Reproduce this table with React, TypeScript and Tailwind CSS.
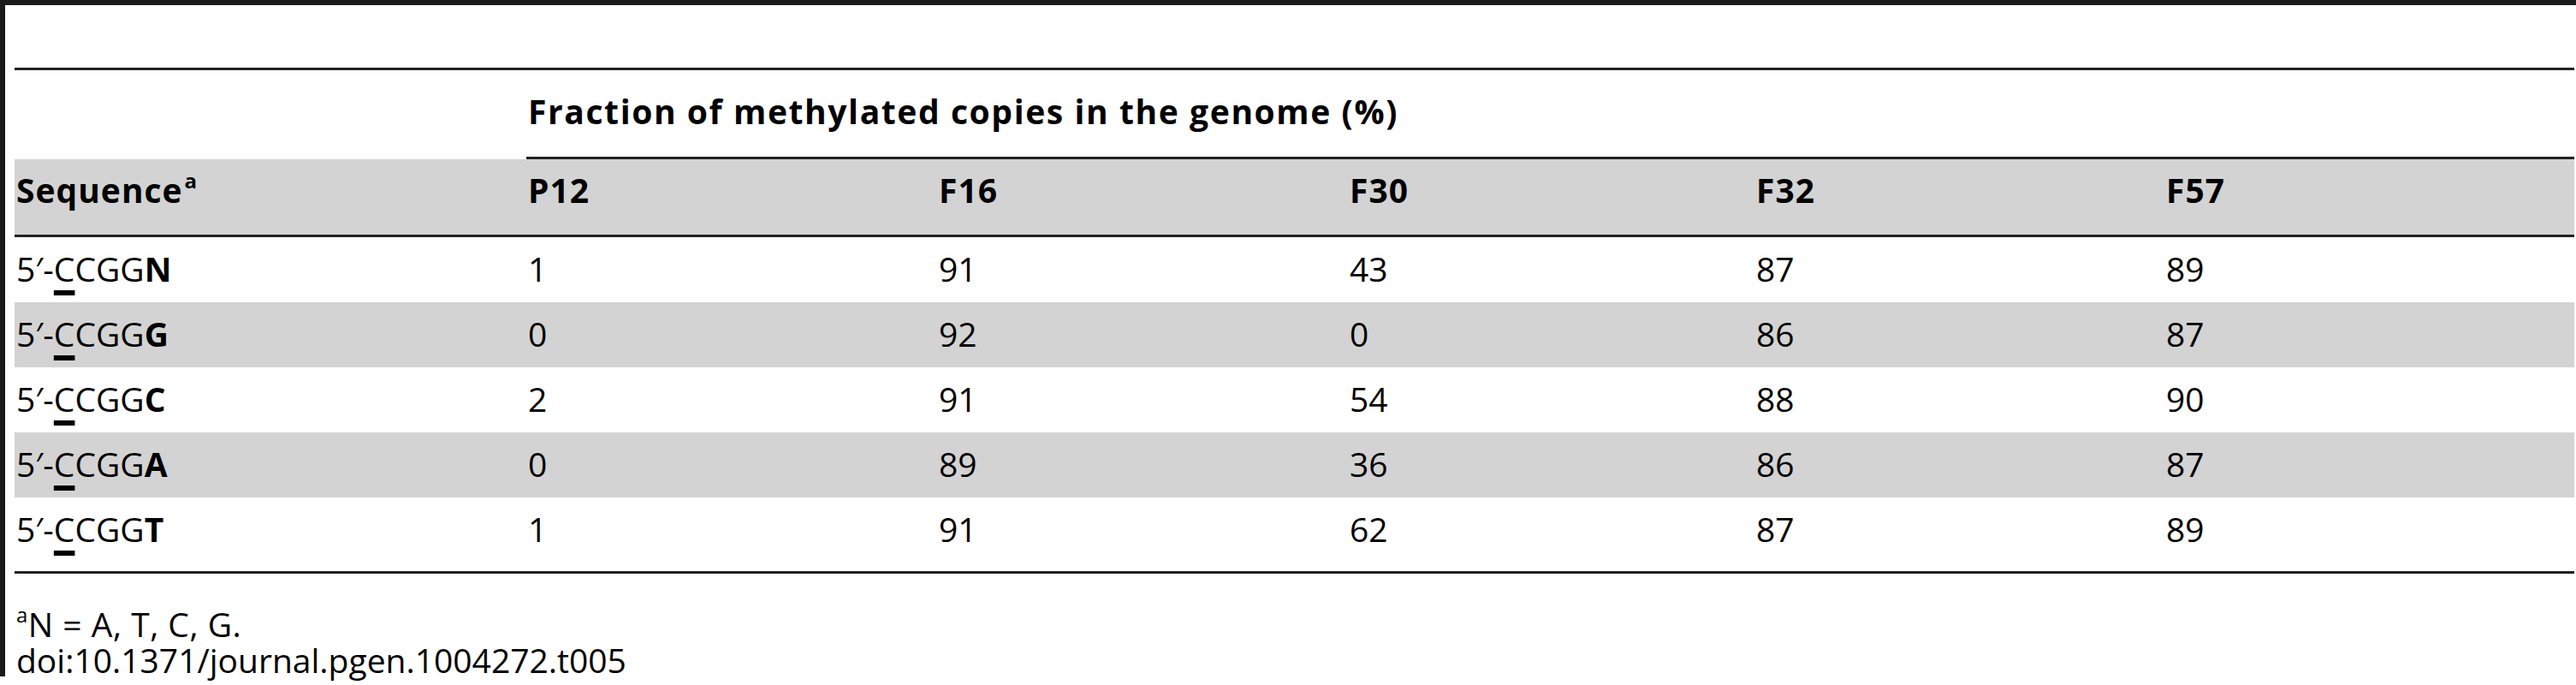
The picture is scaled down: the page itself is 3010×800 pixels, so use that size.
import React from "react";

const cols = "grid grid-cols-[598px_480px_480px_475px_479px_1fr]";

type Row = { last: string; vals: string[]; gray: boolean };

const rows: Row[] = [
  { last: "N", vals: ["1", "91", "43", "87", "89"], gray: false },
  { last: "G", vals: ["0", "92", "0", "86", "87"], gray: true },
  { last: "C", vals: ["2", "91", "54", "88", "90"], gray: false },
  { last: "A", vals: ["0", "89", "36", "86", "87"], gray: true },
  { last: "T", vals: ["1", "91", "62", "87", "89"], gray: false },
];

function Seq({ last }: { last: string }) {
  return (
    <span>
      5{"\u2032"}-
      <span className="underline decoration-[length:6px] underline-offset-[10px] [text-decoration-skip-ink:none]">C</span>
      CGG<span className="font-bold">{last}</span>
    </span>
  );
}

export default function App() {
  return (
    <div
      className="w-[3010px] h-[800px] bg-white text-black overflow-hidden text-[39px] leading-[40px]"
      style={{ fontFamily: '"Open Sans", "Noto Sans", "DejaVu Sans", sans-serif' }}
    >
      <div className="h-[6px] bg-[#1a1a1a]" />
      <div className="flex">
        <div className="w-[6px] h-[784px] bg-[#1a1a1a]" />
        <div className="flex-1 pl-[11px] pr-[2px] pt-[73px]">
          <div className="h-[3px] bg-[#222222]" />
          {/* spanner */}
          <div className={cols}>
            <div />
            <div className="col-span-5 h-[104px] pt-[28px] pl-[2px] border-b-[3px] border-[#222222] font-bold tracking-[1.6px]">
              Fraction of methylated copies in the genome (%)
            </div>
          </div>
          {/* header */}
          <div className={`${cols} bg-[#d3d3d3] h-[88px] font-bold tracking-[1px]`}>
            <div className="pt-[16px] pl-[2px]">
              Sequence<sup className="text-[24px] top-[-17px] ml-[2px]">a</sup>
            </div>
            <div className="pt-[16px] pl-[2px]">P12</div>
            <div className="pt-[16px] pl-[2px]">F16</div>
            <div className="pt-[16px] pl-[2px]">F30</div>
            <div className="pt-[16px] pl-[2px]">F32</div>
            <div className="pt-[16px] pl-[2px]">F57</div>
          </div>
          <div className="h-[3px] bg-[#222222]" />
          {/* body */}
          {rows.map((r, i) => (
            <div
              key={i}
              className={`${cols} ${r.gray ? "bg-[#d3d3d3]" : "bg-white"} ${
                i === rows.length - 1 ? "h-[86px]" : "h-[76px]"
              }`}
            >
              <div className="pt-[17px] pl-[2px]">
                <Seq last={r.last} />
              </div>
              {r.vals.map((v, j) => (
                <div key={j} className="pt-[17px] pl-[2px]">
                  {v}
                </div>
              ))}
            </div>
          ))}
          <div className="h-[3px] bg-[#222222]" />
          {/* footnotes */}
          <div className="pt-[38px] pl-[2px] leading-[42px]">
            <div className="tracking-[0.5px]">
              <sup className="text-[24px] top-[-17px]">a</sup>N = A, T, C, G.
            </div>
            <div>doi:10.1371/journal.pgen.1004272.t005</div>
          </div>
        </div>
      </div>
    </div>
  );
}
